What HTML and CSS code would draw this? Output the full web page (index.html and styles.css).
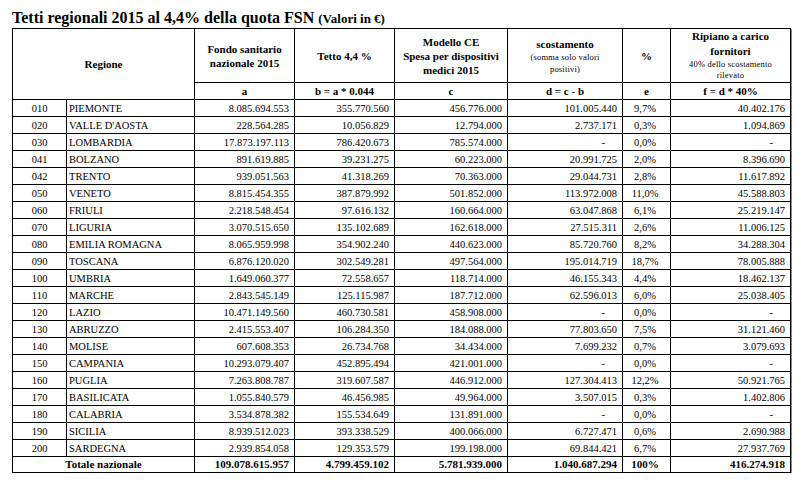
FILE: index.html
```html
<!DOCTYPE html>
<html lang="it">
<head>
<meta charset="utf-8">
<title>Tetti regionali 2015</title>
<link rel="stylesheet" href="styles.css">
</head>
<body>
<div class="page">
  <h1 class="title">Tetti regionali 2015 al 4,4% della quota FSN <span class="unit">(Valori in €)</span></h1>
  <table class="grid">
    <colgroup>
      <col class="c-code"><col class="c-name"><col class="c-a"><col class="c-b"><col class="c-c"><col class="c-d"><col class="c-e"><col class="c-f">
    </colgroup>
    <thead>
      <tr class="h1">
        <th colspan="2" rowspan="2">Regione</th>
        <th>Fondo sanitario<br>nazionale 2015</th>
        <th>Tetto 4,4 %</th>
        <th>Modello CE<br>Spesa per dispositivi<br>medici 2015</th>
        <th>scostamento<br><span class="note">(somma solo valori<br>positivi)</span></th>
        <th>%</th>
        <th class="rip">Ripiano a carico<br>fornitori<br><span class="note">40% dello scostamento<br>rilevato</span></th>
      </tr>
      <tr class="h2">
        <th>a</th>
        <th>b = a * 0.044</th>
        <th>c</th>
        <th>d = c - b</th>
        <th>e</th>
        <th>f = d * 40%</th>
      </tr>
    </thead>
    <tbody>
      <tr><td class="code">010</td><td class="name">PIEMONTE</td><td class="num">8.085.694.553</td><td class="num">355.770.560</td><td class="num">456.776.000</td><td class="num">101.005.440</td><td class="pct">9,7%</td><td class="num">40.402.176</td></tr>
      <tr><td class="code">020</td><td class="name">VALLE D'AOSTA</td><td class="num">228.564.285</td><td class="num">10.056.829</td><td class="num">12.794.000</td><td class="num">2.737.171</td><td class="pct">0,3%</td><td class="num">1.094.869</td></tr>
      <tr><td class="code">030</td><td class="name">LOMBARDIA</td><td class="num">17.873.197.113</td><td class="num">786.420.673</td><td class="num">785.574.000</td><td class="num dash">-</td><td class="pct">0,0%</td><td class="num dash">-</td></tr>
      <tr><td class="code">041</td><td class="name">BOLZANO</td><td class="num">891.619.885</td><td class="num">39.231.275</td><td class="num">60.223.000</td><td class="num">20.991.725</td><td class="pct">2,0%</td><td class="num">8.396.690</td></tr>
      <tr><td class="code">042</td><td class="name">TRENTO</td><td class="num">939.051.563</td><td class="num">41.318.269</td><td class="num">70.363.000</td><td class="num">29.044.731</td><td class="pct">2,8%</td><td class="num">11.617.892</td></tr>
      <tr><td class="code">050</td><td class="name">VENETO</td><td class="num">8.815.454.355</td><td class="num">387.879.992</td><td class="num">501.852.000</td><td class="num">113.972.008</td><td class="pct">11,0%</td><td class="num">45.588.803</td></tr>
      <tr><td class="code">060</td><td class="name">FRIULI</td><td class="num">2.218.548.454</td><td class="num">97.616.132</td><td class="num">160.664.000</td><td class="num">63.047.868</td><td class="pct">6,1%</td><td class="num">25.219.147</td></tr>
      <tr><td class="code">070</td><td class="name">LIGURIA</td><td class="num">3.070.515.650</td><td class="num">135.102.689</td><td class="num">162.618.000</td><td class="num">27.515.311</td><td class="pct">2,6%</td><td class="num">11.006.125</td></tr>
      <tr><td class="code">080</td><td class="name">EMILIA ROMAGNA</td><td class="num">8.065.959.998</td><td class="num">354.902.240</td><td class="num">440.623.000</td><td class="num">85.720.760</td><td class="pct">8,2%</td><td class="num">34.288.304</td></tr>
      <tr><td class="code">090</td><td class="name">TOSCANA</td><td class="num">6.876.120.020</td><td class="num">302.549.281</td><td class="num">497.564.000</td><td class="num">195.014.719</td><td class="pct">18,7%</td><td class="num">78.005.888</td></tr>
      <tr><td class="code">100</td><td class="name">UMBRIA</td><td class="num">1.649.060.377</td><td class="num">72.558.657</td><td class="num">118.714.000</td><td class="num">46.155.343</td><td class="pct">4,4%</td><td class="num">18.462.137</td></tr>
      <tr><td class="code">110</td><td class="name">MARCHE</td><td class="num">2.843.545.149</td><td class="num">125.115.987</td><td class="num">187.712.000</td><td class="num">62.596.013</td><td class="pct">6,0%</td><td class="num">25.038.405</td></tr>
      <tr><td class="code">120</td><td class="name">LAZIO</td><td class="num">10.471.149.560</td><td class="num">460.730.581</td><td class="num">458.908.000</td><td class="num dash">-</td><td class="pct">0,0%</td><td class="num dash">-</td></tr>
      <tr><td class="code">130</td><td class="name">ABRUZZO</td><td class="num">2.415.553.407</td><td class="num">106.284.350</td><td class="num">184.088.000</td><td class="num">77.803.650</td><td class="pct">7,5%</td><td class="num">31.121.460</td></tr>
      <tr><td class="code">140</td><td class="name">MOLISE</td><td class="num">607.608.353</td><td class="num">26.734.768</td><td class="num">34.434.000</td><td class="num">7.699.232</td><td class="pct">0,7%</td><td class="num">3.079.693</td></tr>
      <tr><td class="code">150</td><td class="name">CAMPANIA</td><td class="num">10.293.079.407</td><td class="num">452.895.494</td><td class="num">421.001.000</td><td class="num dash">-</td><td class="pct">0,0%</td><td class="num dash">-</td></tr>
      <tr><td class="code">160</td><td class="name">PUGLIA</td><td class="num">7.263.808.787</td><td class="num">319.607.587</td><td class="num">446.912.000</td><td class="num">127.304.413</td><td class="pct">12,2%</td><td class="num">50.921.765</td></tr>
      <tr><td class="code">170</td><td class="name">BASILICATA</td><td class="num">1.055.840.579</td><td class="num">46.456.985</td><td class="num">49.964.000</td><td class="num">3.507.015</td><td class="pct">0,3%</td><td class="num">1.402.806</td></tr>
      <tr><td class="code">180</td><td class="name">CALABRIA</td><td class="num">3.534.878.382</td><td class="num">155.534.649</td><td class="num">131.891.000</td><td class="num dash">-</td><td class="pct">0,0%</td><td class="num dash">-</td></tr>
      <tr><td class="code">190</td><td class="name">SICILIA</td><td class="num">8.939.512.023</td><td class="num">393.338.529</td><td class="num">400.066.000</td><td class="num">6.727.471</td><td class="pct">0,6%</td><td class="num">2.690.988</td></tr>
      <tr><td class="code">200</td><td class="name">SARDEGNA</td><td class="num">2.939.854.058</td><td class="num">129.353.579</td><td class="num">199.198.000</td><td class="num">69.844.421</td><td class="pct">6,7%</td><td class="num">27.937.769</td></tr>
    </tbody>
    <tfoot>
      <tr class="total"><td colspan="2" class="tlabel">Totale nazionale</td><td class="num">109.078.615.957</td><td class="num">4.799.459.102</td><td class="num">5.781.939.000</td><td class="num">1.040.687.294</td><td class="pct">100%</td><td class="num">416.274.918</td></tr>
    </tfoot>
  </table>
</div>
</body>
</html>
```

FILE: styles.css
```css
html, body {
  margin: 0;
  padding: 0;
  background: #fff;
}
body {
  font-family: "Liberation Serif", "Times New Roman", serif;
  color: #000;
}
.page {
  padding-left: 12px;
}
.title {
  margin: 0;
  padding-top: 7px;
  height: 21px;
  font-size: 16px;
  line-height: 21px;
  font-weight: bold;
  white-space: nowrap;
}
.unit {
  font-size: 13px;
  line-height: 13px;
}
.grid {
  border-collapse: collapse;
  table-layout: fixed;
  width: 778px;
  border: 1px solid #000;
  box-shadow: 1px 1px 0 #8a8a8a;
}
.c-code { width: 54px; }
.c-name { width: 128px; }
.c-a { width: 100px; }
.c-b { width: 100px; }
.c-c { width: 113px; }
.c-d { width: 115px; }
.c-e { width: 48px; }
.c-f { width: 120px; }
th, td {
  border: 1px solid #000;
  padding: 0;
}
th {
  font-weight: bold;
  font-size: 11px;
  text-align: center;
  vertical-align: middle;
}
.h1 th {
  height: 53px;
  line-height: 14px;
}
.h1 th.rip {
  line-height: 15px;
}
.note {
  font-weight: normal;
  font-size: 8.5px;
  line-height: 12px;
  letter-spacing: 0.2px;
  display: inline-block;
}
.rip .note {
  line-height: 11px;
}
.h2 th {
  height: 16px;
  line-height: 16px;
}
td {
  font-size: 10.5px;
  line-height: 14px;
  padding-top: 2px;
  height: 14px;
  white-space: nowrap;
}
.code {
  text-align: center;
}
.name {
  padding-left: 2px;
}
.num {
  text-align: right;
  padding-right: 5px;
}
.num.dash {
  padding-right: 17px;
}
.pct {
  text-align: center;
  padding-right: 3px;
}
.total td {
  font-weight: bold;
  font-size: 11px;
  line-height: 15px;
  height: 15px;
  padding-top: 0;
}
.tlabel {
  text-align: center;
}
```
